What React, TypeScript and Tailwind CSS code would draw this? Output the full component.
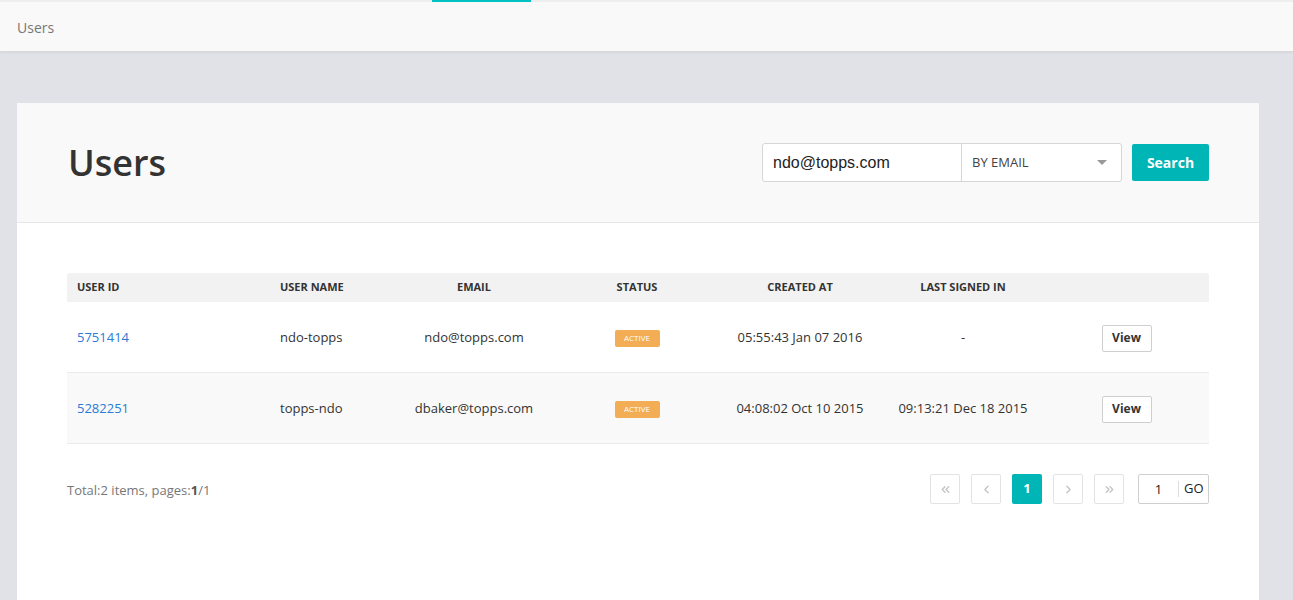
import { ChevronsLeft, ChevronLeft, ChevronRight, ChevronsRight } from 'lucide-react';

const users = [
  { id: '5751414', name: 'ndo-topps', email: 'ndo@topps.com', created: '05:55:43 Jan 07 2016', last: '-' },
  { id: '5282251', name: 'topps-ndo', email: 'dbaker@topps.com', created: '04:08:02 Oct 10 2015', last: '09:13:21 Dec 18 2015' },
];

const cols = 'grid grid-cols-[203px_122px_164px_162px_164px_162px_165px] items-center';

function PageBtn({ children, active }: { children: React.ReactNode; active?: boolean }) {
  return (
    <div
      className={
        active
          ? 'w-[30px] h-[30px] rounded-[2px] bg-[#00b5b5] text-white font-bold text-[13px] flex items-center justify-center'
          : 'w-[30px] h-[30px] rounded-[2px] border border-[#e3e3e3] bg-white text-[#c4c4c4] flex items-center justify-center'
      }
    >
      {children}
    </div>
  );
}

export default function App() {
  return (
    <div className="min-h-[600px] bg-[#e1e2e7] font-['Open_Sans',sans-serif] text-[#333]">
      <div className="h-[2px] bg-[#eeeeee]">
        <div className="ml-[432px] w-[99px] h-[2px] bg-[#00c2c2]" />
      </div>
      <div className="h-[50px] bg-[#f9f9f9] border-b border-[#d9d9d9] shadow-[0_1px_2px_rgba(0,0,0,0.05)] flex items-center pl-[17px] pt-[2px]">
        <span className="text-[14px] text-[#777]">Users</span>
      </div>

      <div className="ml-[17px] mt-[51px] w-[1242px] bg-white min-h-[497px]">
        <div className="h-[120px] bg-[#f9f9f9] border-b border-[#e6e6e6] flex items-center justify-between px-[50px]">
          <h1 className="text-[36px] font-semibold text-[#333] ml-[1px] leading-none">Users</h1>
          <div className="flex items-center">
            <div className="flex h-[39px] border border-[#d6d6d6] rounded-[3px] bg-white">
              <div className="w-[199px] flex items-center pl-[10px] text-[16px] font-['Liberation_Sans',Arial,sans-serif] text-[#222] border-r border-[#d6d6d6]">
                ndo@topps.com
              </div>
              <div className="w-[159px] flex items-center justify-between pl-[10px] pr-[14px] text-[13px] text-[#444]">
                <span>BY EMAIL</span>
                <span className="w-0 h-0 border-l-[5px] border-r-[5px] border-t-[5px] border-l-transparent border-r-transparent border-t-[#999]" />
              </div>
            </div>
            <button className="ml-[10px] w-[77px] h-[37px] rounded-[2px] bg-[#00b5b5] text-white font-bold text-[14px]">
              Search
            </button>
          </div>
        </div>

        <div className="px-[50px] pt-[50px]">
          <div className={`${cols} h-[29px] bg-[#f2f2f2] rounded-t-[3px] text-[11px] font-bold text-[#333] uppercase`}>
            <div className="pl-[10px]">User ID</div>
            <div className="pl-[10px]">User Name</div>
            <div className="text-center">Email</div>
            <div className="text-center">Status</div>
            <div className="text-center">Created At</div>
            <div className="text-center">Last Signed In</div>
            <div />
          </div>
          {users.map((u, i) => (
            <div
              key={u.id}
              className={`${cols} h-[71px] pt-[2px] border-b border-[#ebebeb] text-[13px] text-[#333] ${i % 2 ? 'bg-[#f9f9f9]' : 'bg-white'}`}
            >
              <div className="pl-[10px] text-[#2b7bd6]">{u.id}</div>
              <div className="pl-[10px]">{u.name}</div>
              <div className="text-center">{u.email}</div>
              <div className="flex justify-center">
                <span className="w-[45px] h-[17px] rounded-[2px] bg-[#f3ad55] text-white text-[8px] flex items-center justify-center uppercase">
                  Active
                </span>
              </div>
              <div className="text-center">{u.created}</div>
              <div className="text-center">{u.last}</div>
              <div className="flex justify-center">
                <button className="w-[50px] h-[27px] border border-[#cfcfcf] rounded-[2px] bg-white text-[12px] font-bold text-[#333]">
                  View
                </button>
              </div>
            </div>
          ))}

          <div className="flex items-center justify-between mt-[30px]">
            <div className="text-[13px] text-[#777] pt-[3px]">
              Total:2 items, pages:<b className="text-[#555]">1</b>/1
            </div>
            <div className="flex items-center gap-[11px]">
              <PageBtn><ChevronsLeft size={13} strokeWidth={2.5} /></PageBtn>
              <PageBtn><ChevronLeft size={13} strokeWidth={2.5} /></PageBtn>
              <PageBtn active>1</PageBtn>
              <PageBtn><ChevronRight size={13} strokeWidth={2.5} /></PageBtn>
              <PageBtn><ChevronsRight size={13} strokeWidth={2.5} /></PageBtn>
              <div className="ml-[3px] w-[71px] h-[30px] border border-[#cfcfcf] rounded-[2px] flex items-center text-[13px] text-[#222]">
                <span className="w-[40px] text-center border-r border-[#ddd] leading-[16px]">1</span>
                <span className="pl-[5px]">GO</span>
              </div>
            </div>
          </div>
        </div>
      </div>
    </div>
  );
}
